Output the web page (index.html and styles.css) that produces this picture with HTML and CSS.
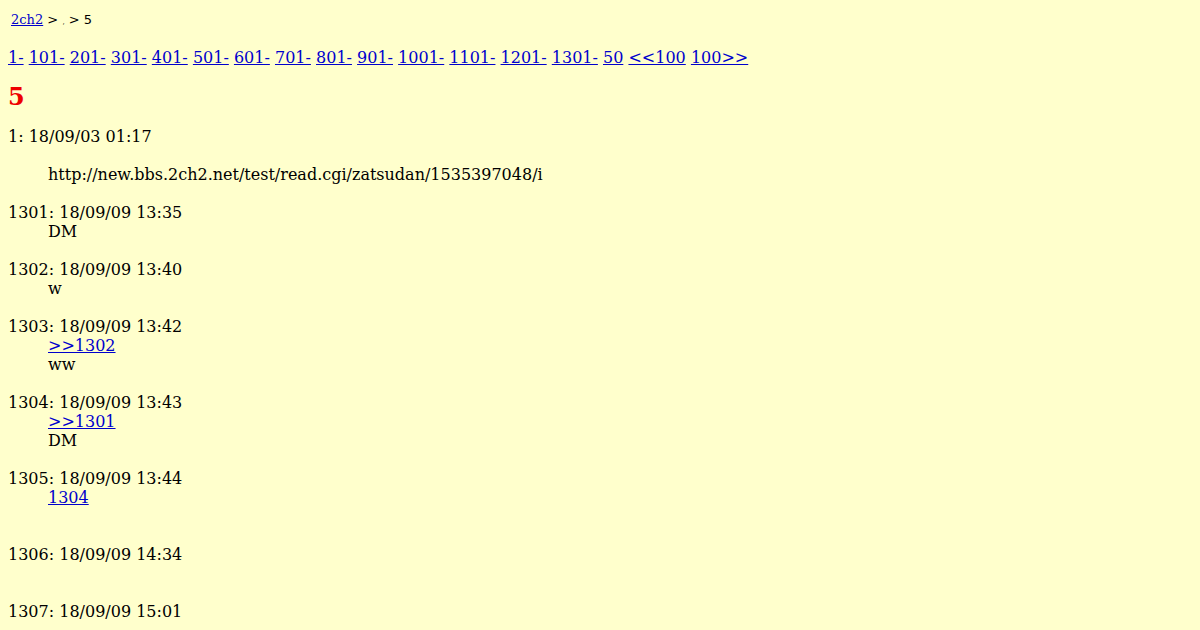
FILE: index.html
```html
<!DOCTYPE html>
<html lang="ja">
<head>
<meta charset="UTF-8">
<title>5</title>
<link rel="stylesheet" href="styles.css">
</head>
<body>

<div class="crumb"><a href="#">2ch2</a> <span class="crumb-text">&gt; <small>,</small> &gt; 5</span></div>

<div class="pages">
<a href="#">1-</a> <a href="#">101-</a> <a href="#">201-</a> <a href="#">301-</a> <a href="#">401-</a> <a href="#">501-</a> <a href="#">601-</a> <a href="#">701-</a> <a href="#">801-</a> <a href="#">901-</a> <a href="#">1001-</a> <a href="#">1101-</a> <a href="#">1201-</a> <a href="#">1301-</a> <a href="#">50</a> <a href="#">&lt;&lt;100</a> <a href="#">100&gt;&gt;</a>
</div>

<h1 class="title">5</h1>

<dl class="thread">
<dt>1: 18/09/03 01:17</dt>
<dd><br>http://new.bbs.2ch2.net/test/read.cgi/zatsudan/1535397048/i<br><br></dd>
<dt>1301: 18/09/09 13:35</dt>
<dd>DM<br><br></dd>
<dt>1302: 18/09/09 13:40</dt>
<dd>w<br><br></dd>
<dt>1303: 18/09/09 13:42</dt>
<dd><a href="#">&gt;&gt;1302</a><br>ww<br><br></dd>
<dt>1304: 18/09/09 13:43</dt>
<dd><a href="#">&gt;&gt;1301</a><br>DM<br><br></dd>
<dt>1305: 18/09/09 13:44</dt>
<dd><a href="#">1304</a><br><br><br></dd>
<dt>1306: 18/09/09 14:34</dt>
<dd><br><br></dd>
<dt>1307: 18/09/09 15:01</dt>
<dd><br><br></dd>
</dl>

</body>
</html>
```

FILE: styles.css
```css
body {
    background-color: #ffffcc;
    color: #000;
    font-family: "DejaVu Serif", serif;
    font-size: 16px;
    line-height: 19px;
    margin: 8px;
}
a {
    color: #0000cc;
}
.crumb {
    font-size: 13px;
    line-height: 15px;
    margin: 4px 0 0 3px;
}
.crumb-text {
    font-family: "DejaVu Sans", sans-serif;
}
.crumb small {
    font-size: 7px;
}
.pages {
    margin-top: 18px;
}
.title {
    color: #ee0000;
    font-size: 24px;
    line-height: 28px;
    margin: 16px 0 0;
}
.thread {
    margin: 16px 0 0;
}
.thread dt {
    margin: 0;
}
.thread dd {
    margin: 0 0 0 40px;
}
```
